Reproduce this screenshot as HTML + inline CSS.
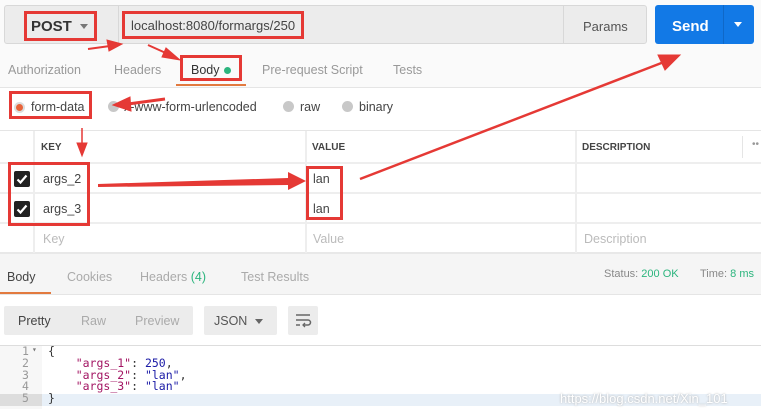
<!DOCTYPE html>
<html><head><meta charset="utf-8"><style>
*{margin:0;padding:0;box-sizing:border-box}
body{width:761px;height:415px;overflow:hidden;background:#fafafa;font-family:"Liberation Sans","DejaVu Sans",sans-serif;position:relative;color:#333}
.a{position:absolute}
.t{font-size:12.5px;color:#999}
.rb{position:absolute;border:3px solid #e53935}
.h{font-size:10px;font-weight:bold;color:#444}
.mono{font-family:"DejaVu Sans Mono","Liberation Mono",monospace;font-size:11.5px}
.cb{position:absolute;width:16px;height:16px;background:#222;border-radius:2px}
</style></head><body>
<!-- top bar -->
<div class="a" style="left:4px;top:5px;width:643px;height:39px;background:#ececec;border:1px solid #d8d8d8;border-radius:3px"></div>
<div class="a" style="left:118px;top:6px;width:1px;height:37px;background:#d8d8d8"></div>
<div class="a" style="left:563px;top:6px;width:1px;height:37px;background:#d8d8d8"></div>
<div class="a" style="left:31px;top:18px;font-size:15px;font-weight:bold;color:#333">POST</div>
<div class="a" style="left:80px;top:24px;border:4px solid transparent;border-top:5px solid #777"></div>
<div class="a" style="left:131px;top:18px;font-size:13px;color:#444">localhost:8080/formargs/250</div>
<div class="a" style="left:583px;top:19px;font-size:13px;color:#555">Params</div>
<div class="a" style="left:655px;top:5px;width:99px;height:39px;background:#1279e6;border-radius:3px"></div>
<div class="a" style="left:723px;top:5px;width:1px;height:39px;background:#0f68c8"></div>
<div class="a" style="left:672px;top:18px;font-size:15px;color:#fff;font-weight:bold">Send</div>
<div class="a" style="left:734px;top:22px;border:4px solid transparent;border-top:5px solid #fff"></div>
<!-- tabs -->
<div class="a t" style="left:8px;top:63px">Authorization</div>
<div class="a t" style="left:114px;top:63px">Headers</div>
<div class="a" style="left:191px;top:63px;font-size:12.5px;color:#333">Body</div>
<div class="a" style="left:224px;top:67px;width:7px;height:7px;border-radius:50%;background:#2cb57e"></div>
<div class="a t" style="left:262px;top:63px">Pre-request Script</div>
<div class="a t" style="left:393px;top:63px">Tests</div>
<div class="a" style="left:176px;top:84px;width:70px;height:2px;background:#e27a3f"></div>
<div class="a" style="left:0;top:87px;width:761px;height:1px;background:#e5e5e5"></div>
<div class="a" style="left:0;top:88px;width:761px;height:42px;background:#fff"></div>
<!-- radios -->
<div class="a" style="left:14px;top:102px;width:11px;height:11px;border-radius:50%;background:#ddd"><div style="margin:2px;width:7px;height:7px;border-radius:50%;background:#e8643a"></div></div>
<div class="a" style="left:31px;top:100px;font-size:12.5px;color:#444">form-data</div>
<div class="a" style="left:108px;top:101px;width:11px;height:11px;border-radius:50%;background:#c8c8c8"></div>
<div class="a" style="left:124px;top:100px;font-size:12.5px;color:#444">x-www-form-urlencoded</div>
<div class="a" style="left:283px;top:101px;width:11px;height:11px;border-radius:50%;background:#c8c8c8"></div>
<div class="a" style="left:300px;top:100px;font-size:12.5px;color:#444">raw</div>
<div class="a" style="left:342px;top:101px;width:11px;height:11px;border-radius:50%;background:#c8c8c8"></div>
<div class="a" style="left:359px;top:100px;font-size:12.5px;color:#444">binary</div>
<!-- table -->
<div class="a" style="left:0;top:130px;width:761px;height:124px;background:#fff;border-top:1px solid #e5e5e5"></div>
<div class="a" style="left:0;top:162px;width:761px;height:2px;background:#eee"></div>
<div class="a" style="left:0;top:192px;width:761px;height:2px;background:#eee"></div>
<div class="a" style="left:0;top:222px;width:761px;height:2px;background:#eee"></div>
<div class="a" style="left:0;top:252px;width:761px;height:2px;background:#e8e8e8"></div>
<div class="a" style="left:33px;top:131px;width:2px;height:122px;background:#eee"></div>
<div class="a" style="left:305px;top:131px;width:2px;height:122px;background:#eee"></div>
<div class="a" style="left:575px;top:131px;width:2px;height:122px;background:#eee"></div>
<div class="a" style="left:742px;top:136px;width:1px;height:22px;background:#e5e5e5"></div>
<div class="a h" style="left:41px;top:142px">KEY</div>
<div class="a h" style="left:312px;top:142px">VALUE</div>
<div class="a h" style="left:582px;top:142px">DESCRIPTION</div>
<div class="a" style="left:752px;top:139px;font-size:10px;color:#999">••</div>
<div class="cb" style="left:14px;top:171px"><svg width="16" height="16"><path d="M3.5 8.5l3 3 6-7" stroke="#fff" stroke-width="2.2" fill="none"/></svg></div>
<div class="cb" style="left:14px;top:201px"><svg width="16" height="16"><path d="M3.5 8.5l3 3 6-7" stroke="#fff" stroke-width="2.2" fill="none"/></svg></div>
<div class="a" style="left:43px;top:172px;font-size:12.5px;color:#444">args_2</div>
<div class="a" style="left:43px;top:202px;font-size:12.5px;color:#444">args_3</div>
<div class="a" style="left:313px;top:172px;font-size:12.5px;color:#444">lan</div>
<div class="a" style="left:313px;top:202px;font-size:12.5px;color:#444">lan</div>
<div class="a t" style="left:43px;top:232px;color:#bbb">Key</div>
<div class="a t" style="left:313px;top:232px;color:#bbb">Value</div>
<div class="a t" style="left:584px;top:232px;color:#bbb">Description</div>
<!-- response header -->
<div class="a" style="left:0;top:254px;width:761px;height:40px;background:#f5f5f5"></div>
<div class="a" style="left:7px;top:270px;font-size:12.5px;color:#444">Body</div>
<div class="a t" style="left:67px;top:270px;color:#aaa">Cookies</div>
<div class="a t" style="left:140px;top:270px;color:#aaa">Headers <span style="color:#2cb57e">(4)</span></div>
<div class="a t" style="left:241px;top:270px;color:#aaa">Test Results</div>
<div class="a" style="left:604px;top:268px;font-size:11px;color:#888">Status: <span style="color:#2cb57e">200 OK</span></div>
<div class="a" style="left:700px;top:268px;font-size:11px;color:#888">Time: <span style="color:#2cb57e">8 ms</span></div>
<div class="a" style="left:0;top:292px;width:51px;height:2px;background:#e27a3f"></div>
<div class="a" style="left:0;top:294px;width:761px;height:1px;background:#e5e5e5"></div>
<div class="a" style="left:0;top:295px;width:761px;height:120px;background:#fff"></div>
<!-- toolbar -->
<div class="a" style="left:4px;top:306px;width:189px;height:29px;background:#ececec;border-radius:2px"></div>
<div class="a" style="left:18px;top:314px;font-size:12.5px;color:#444">Pretty</div>
<div class="a t" style="left:81px;top:314px;color:#aaa">Raw</div>
<div class="a t" style="left:135px;top:314px;color:#aaa">Preview</div>
<div class="a" style="left:204px;top:306px;width:73px;height:29px;background:#ececec;border-radius:2px"></div>
<div class="a" style="left:214px;top:314px;font-size:12.5px;color:#555">JSON</div>
<div class="a" style="left:255px;top:319px;border:4px solid transparent;border-top:5px solid #666"></div>
<div class="a" style="left:288px;top:306px;width:30px;height:29px;background:#ececec;border-radius:2px"></div>
<svg class="a" style="left:294px;top:312px" width="18" height="16"><path d="M2 3H16M2 8H14a2.5 2.5 0 0 1 0 5H9M2 13H6" stroke="#666" stroke-width="1.5" fill="none"/><path d="M11 11l-2 2 2 2" stroke="#666" stroke-width="1.3" fill="none"/></svg>
<!-- code -->
<div class="a" style="left:0;top:345px;width:761px;height:1px;background:#ddd"></div>
<div class="a" style="left:0;top:346px;width:42px;height:63px;background:#f7f7f7"></div>
<div class="a" style="left:0;top:394px;width:761px;height:12px;background:#e8f0f8"></div>
<div class="a" style="left:0;top:394px;width:42px;height:12px;background:#ddd"></div>
<pre class="a mono" style="left:22px;top:346px;line-height:11.8px;color:#999">1
2
3
4
5</pre>
<div class="a mono" style="left:32px;top:345px;font-size:8px;color:#777">▾</div>
<pre class="a mono" style="left:48px;top:346px;line-height:11.8px;color:#333">{
    <span style="color:#a31563">"args_1"</span>: <span style="color:#1a1aa6">250</span>,
    <span style="color:#a31563">"args_2"</span>: <span style="color:#1a1aa6">"lan"</span>,
    <span style="color:#a31563">"args_3"</span>: <span style="color:#1a1aa6">"lan"</span>
}</pre>
<div class="a" style="left:560px;top:391px;font-size:13px;color:#fff;text-shadow:0 0 2px #aaa">https://blog.csdn.net/Xin_101</div>
<!-- red boxes -->
<div class="rb" style="left:24px;top:11px;width:73px;height:30px"></div>
<div class="rb" style="left:122px;top:11px;width:182px;height:28px"></div>
<div class="rb" style="left:180px;top:55px;width:62px;height:26px"></div>
<div class="rb" style="left:9px;top:91px;width:83px;height:28px"></div>
<div class="rb" style="left:8px;top:162px;width:82px;height:64px"></div>
<div class="rb" style="left:306px;top:166px;width:37px;height:54px"></div>
<!-- arrows -->
<svg class="a" style="left:0;top:0" width="761" height="415">
<g fill="#e53935" stroke="#e53935">
<line x1="88" y1="49" x2="110" y2="46" stroke-width="2"/><polygon points="122,44 107,40 109,51"/>
<line x1="148" y1="45" x2="168" y2="54" stroke-width="2"/><polygon points="180,60 166,48 162,57"/>
<line x1="165" y1="99" x2="128" y2="104" stroke-width="3"/><polygon points="113,105 130,97 131,111"/>
<line x1="82" y1="128" x2="82" y2="145" stroke-width="1.5"/><polygon points="82,156 77,143 87,143"/>
<polygon points="98,184 288,178 288,172 306,181 288,190 288,185 98,187" stroke="none"/>
<line x1="360" y1="179" x2="664" y2="62" stroke-width="2.5"/><polygon points="680,55 658,55 665,70"/>
</g></svg>
</body></html>
